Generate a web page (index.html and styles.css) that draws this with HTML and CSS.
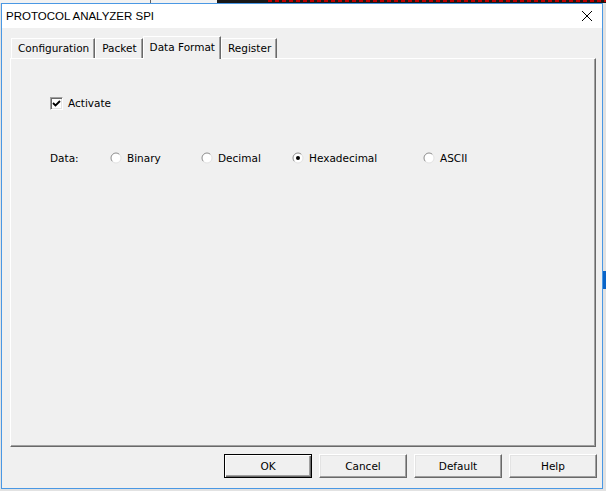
FILE: index.html
```html
<!DOCTYPE html>
<html>
<head>
<meta charset="utf-8">
<title>PROTOCOL ANALYZER SPI</title>
<link rel="stylesheet" href="styles.css">
</head>
<body>
<div class="window">
  <div class="titlebar">
    <span class="title">PROTOCOL ANALYZER SPI</span>
    <svg class="close" width="12" height="12" viewBox="0 0 12 12"><path d="M1 1L11 11M11 1L1 11" stroke="#000" stroke-width="1" fill="none"/></svg>
  </div>
  <div class="client">
    <div class="tabs">
      <div class="tab">Configuration</div>
      <div class="tab">Packet</div>
      <div class="tab active">Data Format</div>
      <div class="tab">Register</div>
    </div>
    <div class="panel">
      <div class="check-row">
        <span class="checkbox"><svg width="11" height="11" viewBox="0 0 11 11"><path d="M2 5L4.5 7.5L9 3" stroke="#000" stroke-width="1.8" fill="none"/></svg></span>
        <span>Activate</span>
      </div>
      <div class="data-row">
        <span class="data-label">Data:</span>
        <span class="opt"><svg class="radio" width="12" height="12" viewBox="0 0 12 12"><circle cx="6" cy="6" r="5" fill="#fff"/><path d="M2.46 9.54A5 5 0 0 1 9.54 2.46" stroke="#8c8c8c" fill="none"/><path d="M9.54 2.46A5 5 0 0 1 2.46 9.54" stroke="#e3e3e3" fill="none"/></svg>Binary</span>
        <span class="opt"><svg class="radio" width="12" height="12" viewBox="0 0 12 12"><circle cx="6" cy="6" r="5" fill="#fff"/><path d="M2.46 9.54A5 5 0 0 1 9.54 2.46" stroke="#8c8c8c" fill="none"/><path d="M9.54 2.46A5 5 0 0 1 2.46 9.54" stroke="#e3e3e3" fill="none"/></svg>Decimal</span>
        <span class="opt wide"><svg class="radio" width="12" height="12" viewBox="0 0 12 12"><circle cx="6" cy="6" r="5" fill="#fff"/><path d="M2.46 9.54A5 5 0 0 1 9.54 2.46" stroke="#8c8c8c" fill="none"/><path d="M9.54 2.46A5 5 0 0 1 2.46 9.54" stroke="#e3e3e3" fill="none"/><circle cx="6" cy="6" r="2" fill="#000"/></svg>Hexadecimal</span>
        <span class="opt"><svg class="radio" width="12" height="12" viewBox="0 0 12 12"><circle cx="6" cy="6" r="5" fill="#fff"/><path d="M2.46 9.54A5 5 0 0 1 9.54 2.46" stroke="#8c8c8c" fill="none"/><path d="M9.54 2.46A5 5 0 0 1 2.46 9.54" stroke="#e3e3e3" fill="none"/></svg>ASCII</span>
      </div>
    </div>
    <div class="buttons">
      <button class="btn default">OK</button>
      <button class="btn">Cancel</button>
      <button class="btn">Default</button>
      <button class="btn">Help</button>
    </div>
  </div>
</div>
</body>
</html>
```
FILE: styles.css
```css
* { box-sizing: border-box; }
html, body { margin: 0; }
body {
  width: 606px;
  height: 491px;
  overflow: hidden;
  padding: 3px 0 0 1px;
  font-family: "DejaVu Sans", sans-serif;
  font-size: 10.5px;
  color: #000;
  background:
    repeating-linear-gradient(to right, #c00000 0 4px, transparent 4px 7px) 268px 0 / 338px 2px no-repeat,
    linear-gradient(to right, #f2f2f2 0 150px, #606060 150px 151px, #f2f2f2 151px 217px, #181818 217px) 0 0 / 100% 3px no-repeat,
    linear-gradient(#0a64c8, #0a64c8) 603px 271px / 3px 18px no-repeat,
    #e2e2e2;
}
.window {
  width: 602px;
  height: 486px;
  border: 1px solid #4a98e4;
  background: #f0f0f0;
  display: flex;
  flex-direction: column;
}
.titlebar {
  height: 24px;
  background: #fff;
  display: flex;
  align-items: center;
  justify-content: space-between;
  padding: 0 9px 0 4px;
}
.title {
  font-family: "Liberation Sans", sans-serif;
  font-size: 11.5px;
}
.close { display: block; }
.client {
  flex: 1;
  display: flex;
  flex-direction: column;
  padding: 8px 6px 0 8px;
}
.tabs {
  display: flex;
  align-items: flex-end;
  height: 22px;
  padding-left: 1px;
  position: relative;
  z-index: 1;
}
.tab {
  height: 20px;
  padding: 0 5px 1px 6px;
  border-top: 1px solid #fff;
  border-left: 1px solid #fff;
  border-right: 1px solid #696969;
  box-shadow: inset -1px 0 #a0a0a0;
  background: #f0f0f0;
  display: flex;
  align-items: center;
  white-space: nowrap;
}
.tab.active {
  height: 23px;
  margin-bottom: -1px;
  padding-bottom: 3px;
}
.panel {
  height: 389px;
  border-top: 1px solid #fff;
  border-left: 1px solid #fff;
  border-right: 1px solid #696969;
  border-bottom: 1px solid #696969;
  box-shadow: inset -1px -1px #a0a0a0;
  padding: 38px 0 0 39px;
}
.check-row {
  display: flex;
  align-items: center;
  gap: 5px;
  height: 13px;
}
.check-row span:last-child { margin-top: -1px; }
.checkbox {
  width: 13px;
  height: 13px;
  background: #fff;
  border: 1px solid;
  border-color: #a0a0a0 #fff #fff #a0a0a0;
  box-shadow: inset 1px 1px #696969, inset -1px -1px #e3e3e3;
  display: block;
}
.checkbox svg { display: block; }
.data-row {
  display: flex;
  align-items: center;
  height: 13px;
  margin-top: 41px;
}
.data-label { width: 60px; }
.opt {
  display: flex;
  align-items: center;
  gap: 5px;
  width: 91px;
  white-space: nowrap;
}
.opt.wide { width: 131px; }
.radio { display: block; flex: none; }
.buttons {
  display: flex;
  justify-content: flex-end;
  gap: 7px;
  margin-top: 7px;
  margin-right: -1px;
}
.btn {
  width: 88px;
  height: 24px;
  padding: 0;
  font: inherit;
  color: #000;
  background: #f0f0f0;
  border: 1px solid;
  border-color: #fff #696969 #696969 #fff;
  box-shadow: inset -1px -1px #a0a0a0, inset 1px 1px #e3e3e3;
}
.btn.default {
  border: 1px solid #000;
  box-shadow: inset 1px 1px #fff, inset -1px -1px #696969, inset -2px -2px #a0a0a0;
}
```
